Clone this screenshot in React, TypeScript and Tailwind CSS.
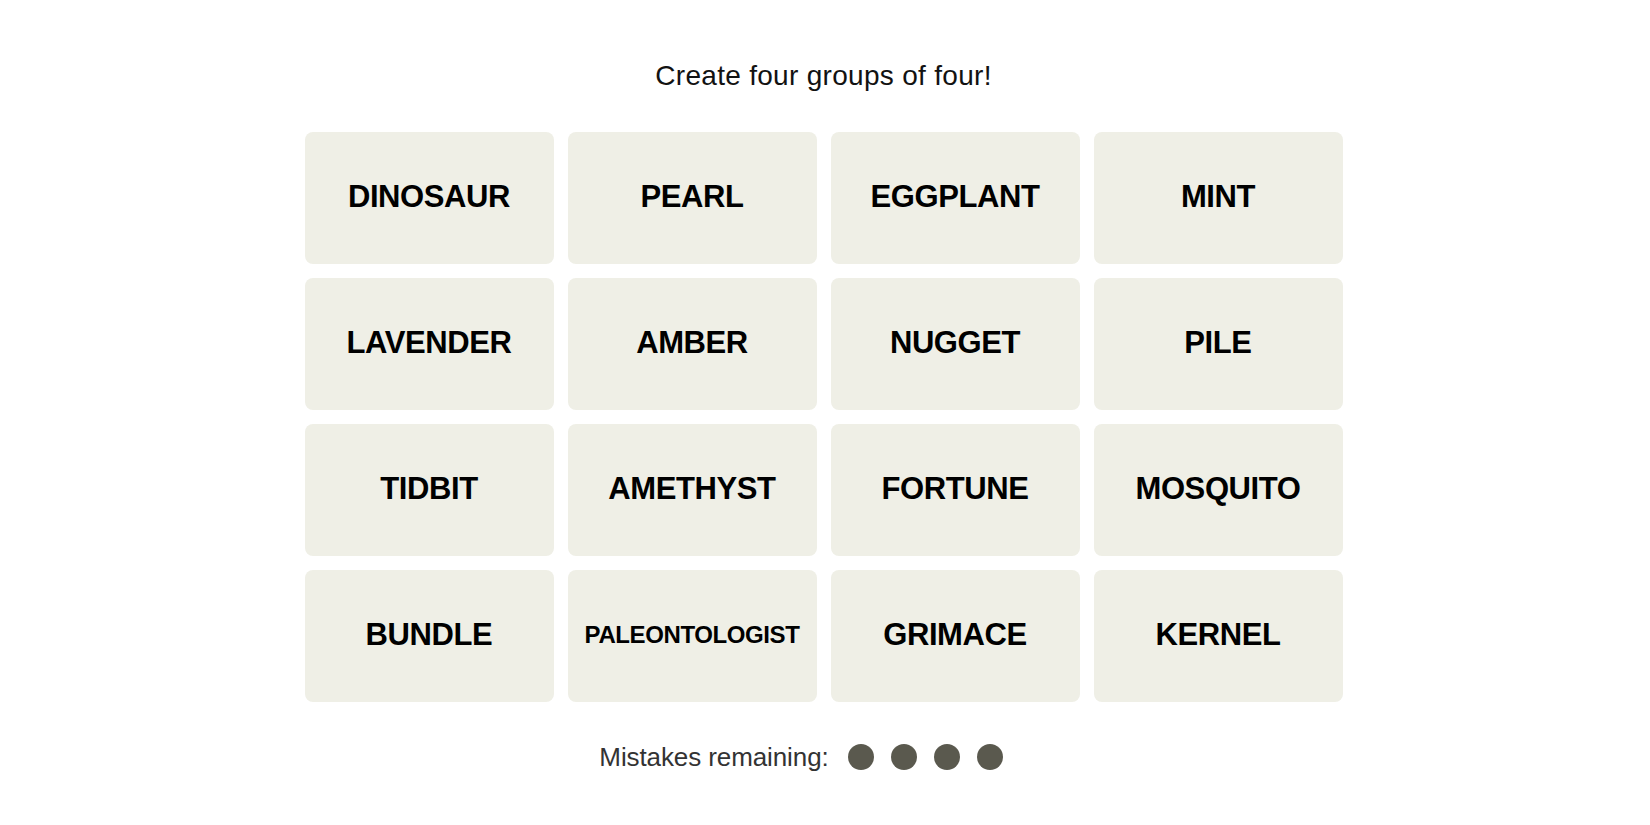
import React from "react";

const words = [
  "DINOSAUR", "PEARL", "EGGPLANT", "MINT",
  "LAVENDER", "AMBER", "NUGGET", "PILE",
  "TIDBIT", "AMETHYST", "FORTUNE", "MOSQUITO",
  "BUNDLE", "PALEONTOLOGIST", "GRIMACE", "KERNEL",
];

export default function App() {
  return (
    <div className="w-full min-h-[825px] bg-white flex flex-col items-center" style={{ fontFamily: '"Liberation Sans", Arial, sans-serif' }}>
      <div className="mt-[60px] h-[32px] leading-[32px] text-[28px] text-[#121212] tracking-[0.3px] mr-[3px]">
        Create four groups of four!
      </div>
      <div className="mt-[40px] mr-[3px] grid grid-cols-[repeat(4,249px)] auto-rows-[132px] gap-[14px]">
        {words.map((w) => (
          <button
            key={w}
            className={
              "bg-[#efefe6] rounded-[8px] flex items-center justify-center pb-[2px] font-bold text-black uppercase " +
              (w.length > 10 ? "text-[24px] tracking-[-0.4px]" : "text-[31px] tracking-[-0.4px]")
            }
          >
            {w}
          </button>
        ))}
      </div>
      <div className="mt-[42px] h-[26px] flex items-center mr-[48px]">
        <span className="text-[26px] text-[#333333] tracking-[-0.1px] mr-[19px]">Mistakes remaining:</span>
        <div className="flex gap-[17px]">
          <span className="w-[26px] h-[26px] rounded-full bg-[#5a594e]" />
          <span className="w-[26px] h-[26px] rounded-full bg-[#5a594e]" />
          <span className="w-[26px] h-[26px] rounded-full bg-[#5a594e]" />
          <span className="w-[26px] h-[26px] rounded-full bg-[#5a594e]" />
        </div>
      </div>
    </div>
  );
}
